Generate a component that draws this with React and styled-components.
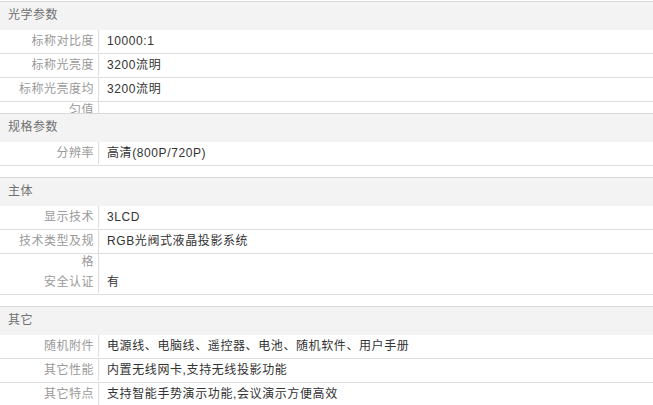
import React from "react";
import styled, { createGlobalStyle } from "styled-components";

const GlobalStyle = createGlobalStyle`
  html, body {
    margin: 0;
    padding: 0;
    background: #ffffff;
  }
  body {
    font-family: "Liberation Sans", "Noto Sans CJK SC", sans-serif;
    font-size: 12px;
  }
`;

const groups = [
  {
    title: "光学参数",
    rows: [
      { name: "标称对比度", value: "10000:1" },
      { name: "标称光亮度", value: "3200流明" },
      { name: "标称光亮度均匀值", value: "3200流明" },
    ],
  },
  {
    title: "规格参数",
    rows: [{ name: "分辨率", value: "高清(800P/720P)" }],
  },
  {
    title: "主体",
    rows: [
      { name: "显示技术", value: "3LCD" },
      { name: "技术类型及规格", value: "RGB光阀式液晶投影系统" },
      { name: "安全认证", value: "有", clear: 17 },
    ],
  },
  {
    title: "其它",
    rows: [
      { name: "随机附件", value: "电源线、电脑线、遥控器、电池、随机软件、用户手册" },
      { name: "其它性能", value: "内置无线网卡,支持无线投影功能" },
      { name: "其它特点", value: "支持智能手势演示功能,会议演示方便高效" },
    ],
  },
];

export default function App() {
  return (
    <>
      <GlobalStyle />
      <Page>
        {groups.map((g) => (
          <Section key={g.title}>
            <Head>{g.title}</Head>
            <List>
              {g.rows.map((r) => (
                <Row key={r.name} $clear={r.clear || 0}>
                  <Label>{r.name}</Label>
                  <Value>{r.value}</Value>
                </Row>
              ))}
            </List>
          </Section>
        ))}
      </Page>
    </>
  );
}

const Page = styled.div`
  width: 653px;
  padding-top: 1px;
  display: flex;
  flex-direction: column;
`;

const Section = styled.div`
  border-top: 1px solid #dadada;
  padding-bottom: 11px;
  overflow: hidden;
`;

const Head = styled.div`
  height: 28px;
  line-height: 27px;
  background-color: #f3f3f3;
  padding-left: 8px;
  color: #707070;
  letter-spacing: 0.5px;
`;

const List = styled.div`
  display: flex;
  flex-direction: column;
`;

const Row = styled.div`
  display: flex;
  align-items: flex-start;
  height: 23px;
  padding-top: ${(p) => p.$clear}px;
  border-bottom: 1px solid #dedede;
`;

const Label = styled.div`
  flex: none;
  width: 99px;
  box-sizing: border-box;
  padding: 1px 4px 0 14px;
  line-height: 21px;
  text-align: right;
  color: #9a9a9a;
  letter-spacing: 0.5px;
  border-right: 1px solid #dedede;
`;

const Value = styled.div`
  padding-left: 8px;
  line-height: 23px;
  color: #333333;
  letter-spacing: 0.6px;
  white-space: nowrap;
`;
